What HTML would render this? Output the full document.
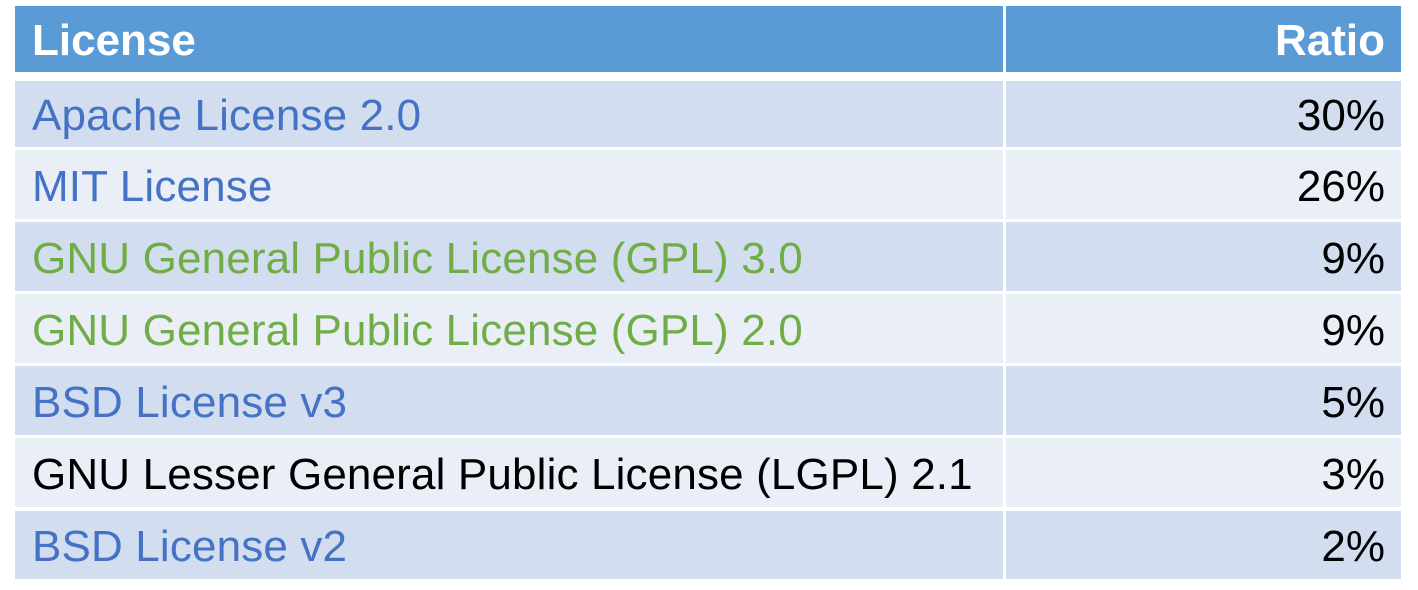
<!DOCTYPE html><html><head><style>
body{margin:0;width:1418px;height:590px;background:#fff;position:relative;overflow:hidden;font-family:"Liberation Sans",Arial,sans-serif}
.c{position:absolute;font-size:44px;box-sizing:border-box;display:flex;align-items:center;white-space:pre;padding-top:4px}
.l{left:15px;width:988px;padding-left:17px;letter-spacing:0.15px}
.r{left:1006px;width:395px;justify-content:flex-end;padding-right:16px;color:#000}
.h{background:#5B9BD5;color:#fff;font-weight:bold}
.d{background:#D2DEEF}.g{background:#EAEFF7}
.b{color:#4472C4}.gr{color:#70AD47}.k{color:#000}
</style></head><body>
<div class="c l h" style="top:6px;height:66px;letter-spacing:0">License</div><div class="c r h" style="top:6px;height:66px;color:#fff">Ratio</div>
<div class="c l d b" style="top:81px;height:66px">Apache License 2.0</div><div class="c r d" style="top:81px;height:66px">30%</div>
<div class="c l g b" style="top:150px;height:69px">MIT License</div><div class="c r g" style="top:150px;height:69px">26%</div>
<div class="c l d gr" style="top:222px;height:69px">GNU General Public License (GPL) 3.0</div><div class="c r d" style="top:222px;height:69px">9%</div>
<div class="c l g gr" style="top:294px;height:69px">GNU General Public License (GPL) 2.0</div><div class="c r g" style="top:294px;height:69px">9%</div>
<div class="c l d b" style="top:366px;height:69px">BSD License v3</div><div class="c r d" style="top:366px;height:69px">5%</div>
<div class="c l g k" style="top:438px;height:69px">GNU Lesser General Public License (LGPL) 2.1</div><div class="c r g" style="top:438px;height:69px">3%</div>
<div class="c l d b" style="top:511px;height:68px">BSD License v2</div><div class="c r d" style="top:511px;height:68px">2%</div>
</body></html>
